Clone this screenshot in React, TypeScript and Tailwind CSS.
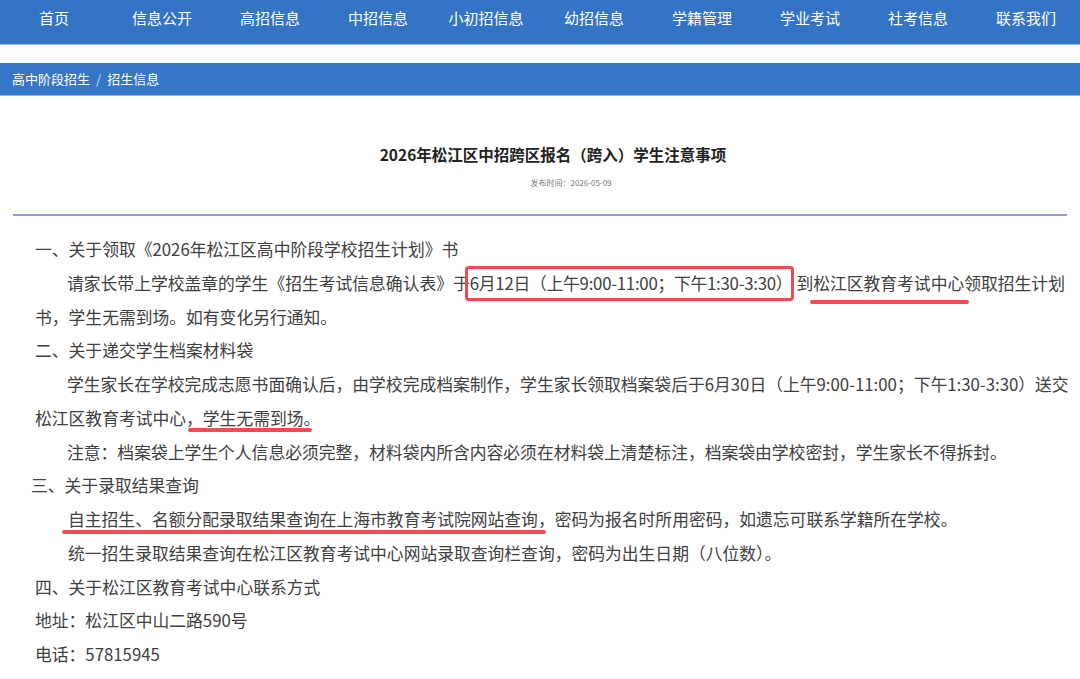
import React from 'react';

const navItems = ['首页', '信息公开', '高招信息', '中招信息', '小初招信息', '幼招信息', '学籍管理', '学业考试', '社考信息', '联系我们'];

const font = { fontFamily: '"Noto Sans CJK SC", "Noto Sans", sans-serif' };

// red hand-drawn underline under a phrase
function Underline({ children, cls }: { children: React.ReactNode; cls: string }) {
  return (
    <span className="relative">
      {children}
      <span className={`absolute h-[4px] rounded-full bg-[#ee4b53] ${cls}`} />
    </span>
  );
}

function Line({ indent, children }: { indent: string; children: React.ReactNode }) {
  return <div className={`whitespace-nowrap h-[33.75px] ${indent}`}>{children}</div>;
}

export default function App() {
  return (
    <div className="w-[1080px] h-[679px] overflow-hidden bg-white" style={font}>
      {/* Top navigation */}
      <div className="h-[45px] bg-[#3474c4] border-b border-[#8cb9e9] flex">
        {navItems.map((item) => (
          <div key={item} className="w-[108px] text-center text-[15px] leading-[36px] text-white">
            {item}
          </div>
        ))}
      </div>

      <div className="h-[18px]" />

      {/* Breadcrumb */}
      <div className="h-[33px] bg-[#3676c6] border-b border-[#8cb9e9] flex items-center px-[12px] text-[13px] text-white">
        <span>高中阶段招生</span>
        <span className="mx-[6px] text-[#c9dcf3]">/</span>
        <span>招生信息</span>
      </div>

      {/* Article header */}
      <div className="pt-[48px] text-center">
        <h1 className="pl-[26px] text-[15.5px] leading-[20px] font-bold text-[#222]">
          2026年松江区中招跨区报名（跨入）学生注意事项
        </h1>
        <div className="mt-[13px] pl-[62px] text-[8px] leading-[12px] text-[#777]">发布时间：2026-05-09</div>
      </div>

      <div className="mx-[13px] mt-[25px] h-[2px] bg-[#85a4c6]" />

      {/* Body */}
      <div className="pt-[17px] text-[16.8px] leading-[33.75px] text-[#404040]">
        <Line indent="pl-[35px]">一、关于领取《2026年松江区高中阶段学校招生计划》书</Line>
        <Line indent="pl-[67px]">
          请家长带上学校盖章的学生《招生考试信息确认表》于
          <span className="relative tracking-[-0.25px]">
            6月12日（上午9:00-11:00；下午1:30-3:30）
            <span className="absolute -left-[5px] -right-[2px] -top-[5px] -bottom-[6px] border-[3px] border-[#ef4a52] rounded-[4px]" />
          </span>
          <span className="ml-[4px]">到</span>
          <Underline cls="-left-[3px] right-[-5px] top-[29px]">松江区教育考试中心</Underline>
          领取招生计划
        </Line>
        <Line indent="pl-[35px]">书，学生无需到场。如有变化另行通知。</Line>
        <Line indent="pl-[35px]">二、关于递交学生档案材料袋</Line>
        <Line indent="pl-[67px]">
          学生家长在学校完成志愿书面确认后，由学校完成档案制作，学生家长领取档案袋后于6月30日（上午9:00-11:00；下午1:30-3:30）送交
        </Line>
        <Line indent="pl-[35px]">
          松江区教育考试中心
          <Underline cls="left-[2px] right-[8px] top-[22px]">，学生无需到场。</Underline>
        </Line>
        <Line indent="pl-[67px]">
          注意：档案袋上学生个人信息必须完整，材料袋内所含内容必须在材料袋上清楚标注，档案袋由学校密封，学生家长不得拆封。
        </Line>
        <Line indent="pl-[31px]">三、关于录取结果查询</Line>
        <Line indent="pl-[68px]">
          <Underline cls="-left-[6px] -right-[8px] top-[23px]">自主招生、名额分配录取结果查询在上海市教育考试院网站查询</Underline>
          ，密码为报名时所用密码，如遗忘可联系学籍所在学校。
        </Line>
        <Line indent="pl-[68px]">统一招生录取结果查询在松江区教育考试中心网站录取查询栏查询，密码为出生日期（八位数）。</Line>
        <Line indent="pl-[35px]">四、关于松江区教育考试中心联系方式</Line>
        <Line indent="pl-[35px]">地址：松江区中山二路590号</Line>
        <Line indent="pl-[35px]">电话：57815945</Line>
      </div>
    </div>
  );
}
